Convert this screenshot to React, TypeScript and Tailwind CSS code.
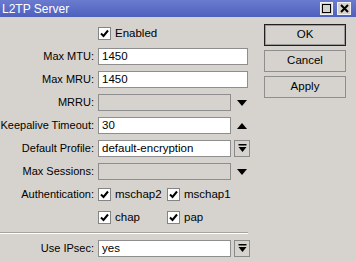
import React from "react";

const font = { fontFamily: '"Liberation Sans", Arial, sans-serif' };

function Check() {
  return (
    <div className="w-[13px] h-[13px] bg-white border border-[#848484] flex items-center justify-center shrink-0">
      <svg width="9" height="9" viewBox="0 0 9 9">
        <path d="M1 4.5 L3.5 7 L8 1.5" stroke="#000" strokeWidth="2" fill="none" />
      </svg>
    </div>
  );
}

function Tri({ up }: { up?: boolean }) {
  return (
    <svg width="10" height="6" viewBox="0 0 10 6" className="shrink-0">
      {up ? <polygon points="0,6 10,6 5,0" fill="#000" /> : <polygon points="0,0 10,0 5,6" fill="#000" />}
    </svg>
  );
}

function DropBtn() {
  return (
    <div className="w-[16px] h-[17px] border border-[#8a8a8a] bg-[#d6d3ce] flex items-center justify-center shrink-0">
      <svg width="9" height="9" viewBox="0 0 9 9">
        <rect x="0.5" y="0" width="8" height="1.5" fill="#000" />
        <polygon points="0.5,3 8.5,3 4.5,8" fill="#000" />
      </svg>
    </div>
  );
}

function Row({ label, children }: { label: string; children?: React.ReactNode }) {
  return (
    <div className="flex items-center h-[17px]">
      <div className="w-[95px] text-right pr-[1px] text-[11px] text-black leading-none whitespace-nowrap">{label}</div>
      <div className="ml-[3px] flex items-center">{children}</div>
    </div>
  );
}

function Input({ value, w, disabled }: { value?: string; w: number; disabled?: boolean }) {
  return (
    <div
      className={`h-[17px] border border-[#8e8e8e] flex items-center pl-[3px] text-[11.5px] leading-none whitespace-nowrap ${
        disabled ? "bg-[#d6d3ce]" : "bg-white"
      }`}
      style={{ width: w }}
    >
      {value}
    </div>
  );
}

function Button({ label, def }: { label: string; def?: boolean }) {
  return (
    <div
      className={`w-[82px] h-[22px] flex items-center justify-center text-[11.5px] text-black bg-[#d6d3ce] ${
        def ? "border border-[#202020] shadow-[inset_0_0_0_1px_#9a9a9a]" : "border border-[#8e8e8e]"
      }`}
    >
      {label}
    </div>
  );
}

export default function App() {
  return (
    <div className="w-[356px] h-[261px] bg-[#d6d3ce] overflow-hidden text-black" style={font}>
      <div className="h-[17px] bg-gradient-to-b from-[#6a7bcf] to-[#4e60bd] flex items-center justify-between pl-[2px] pr-[5px]">
        <span className="text-white text-[12px] leading-none">L2TP Server</span>
        <div className="flex items-center gap-[4px]">
          <div className="w-[13px] h-[13px] bg-[#d6d3ce] border border-[#f0f0f0] flex items-center justify-center">
            <div className="w-[9px] h-[9px] border-[1.5px] border-black" />
          </div>
          <div className="w-[14px] h-[13px] bg-[#d6d3ce] border border-[#f0f0f0] flex items-center justify-center">
            <svg width="9" height="9" viewBox="0 0 9 9">
              <path d="M1 1 L8 8 M8 1 L1 8" stroke="#000" strokeWidth="2" />
            </svg>
          </div>
        </div>
      </div>
      <div className="flex">
        <div className="w-[250px] pt-[8px] flex flex-col">
          <div className="flex flex-col gap-[6px]">
            <div className="flex items-center h-[17px] pl-[98px]">
              <Check />
              <span className="ml-[4px] text-[11.5px] leading-none">Enabled</span>
            </div>
            <Row label="Max MTU:">
              <Input value="1450" w={150} />
            </Row>
            <Row label="Max MRU:">
              <Input value="1450" w={150} />
            </Row>
            <Row label="MRRU:">
              <Input w={133} disabled />
              <div className="ml-[6px]">
                <Tri />
              </div>
            </Row>
            <Row label="Keepalive Timeout:">
              <Input value="30" w={133} />
              <div className="ml-[6px]">
                <Tri up />
              </div>
            </Row>
            <Row label="Default Profile:">
              <Input value="default-encryption" w={133} />
              <div className="ml-[3px]">
                <DropBtn />
              </div>
            </Row>
            <Row label="Max Sessions:">
              <Input w={133} disabled />
              <div className="ml-[6px]">
                <Tri />
              </div>
            </Row>
            <Row label="Authentication:">
              <div className="w-[69px] flex items-center">
                <Check />
                <span className="ml-[4px] text-[11.5px] leading-none">mschap2</span>
              </div>
              <div className="flex items-center">
                <Check />
                <span className="ml-[4px] text-[11.5px] leading-none">mschap1</span>
              </div>
            </Row>
            <Row label="">
              <div className="w-[69px] flex items-center">
                <Check />
                <span className="ml-[4px] text-[11.5px] leading-none">chap</span>
              </div>
              <div className="flex items-center">
                <Check />
                <span className="ml-[4px] text-[11.5px] leading-none">pap</span>
              </div>
            </Row>
          </div>
          <div className="mt-[6px] w-[248px] h-[2px] border-t border-[#a6a39e] border-b border-b-white" />
          <div className="mt-[6px]">
            <Row label="Use IPsec:">
              <Input value="yes" w={133} />
              <div className="ml-[3px]">
                <DropBtn />
              </div>
            </Row>
          </div>
        </div>
        <div className="ml-[14px] pt-[7px] flex flex-col gap-[4px]">
          <Button label="OK" def />
          <Button label="Cancel" />
          <Button label="Apply" />
        </div>
      </div>
    </div>
  );
}
